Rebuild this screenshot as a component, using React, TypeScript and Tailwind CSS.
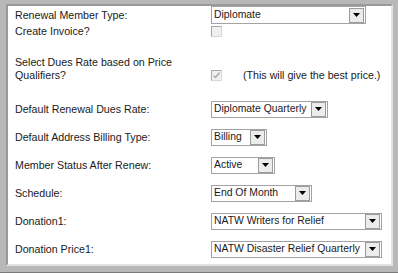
import React from "react";

type SelectProps = { value: string; width: number; tall?: boolean };

function FakeSelect({ value, width, tall }: SelectProps) {
  return (
    <div
      className={`flex items-center bg-white border border-[#a3a3a3] ${tall ? "h-[18px]" : "h-[17px]"}`}
      style={{ width }}
    >
      <span className="flex-1 overflow-hidden whitespace-nowrap pl-[2px] text-[10.4px] leading-none">{value}</span>
      <span className="mr-[1px] flex h-[15px] w-[15px] shrink-0 items-center justify-center border border-[#9b9b9b] bg-[#ececec]">
        <svg width="7" height="4" viewBox="0 0 7 4">
          <path d="M0 0h7L3.5 4z" fill="#000" />
        </svg>
      </span>
    </div>
  );
}

function Check({ checked }: { checked?: boolean }) {
  return (
    <span className="flex h-[11px] w-[11px] items-center justify-center border border-t-[#a8a8a8] border-l-[#a8a8a8] border-r-[#d8d8d8] border-b-[#d8d8d8] bg-[#f0f0f0]">
      {checked && (
        <svg width="9" height="9" viewBox="0 0 9 9">
          <path d="M1.5 4.5l2 2 4-5" stroke="#a8a8a8" strokeWidth="1.3" fill="none" />
        </svg>
      )}
    </span>
  );
}

const rows: { label: string; value: string; width: number }[] = [
  { label: "Default Renewal Dues Rate:", value: "Diplomate Quarterly", width: 117 },
  { label: "Default Address Billing Type:", value: "Billing", width: 56 },
  { label: "Member Status After Renew:", value: "Active", width: 64 },
  { label: "Schedule:", value: "End Of Month", width: 101 },
  { label: "Donation1:", value: "NATW Writers for Relief", width: 171 },
  { label: "Donation Price1:", value: "NATW Disaster Relief Quarterly", width: 171 },
];

export default function App() {
  return (
    <div className="h-[273px] w-[398px] bg-[#b8b8b8] pt-[4px] pl-[6px] pr-[5px] pb-[6px] border-b border-[#7a7a7a] font-['Liberation_Sans',Arial,sans-serif] text-[10.67px] text-[#1a1a1a]">
      <div className="h-full border-2 border-t-[#9a9a9a] border-l-[#9a9a9a] border-r-[#e2e2e2] border-b-[#e2e2e2] bg-white pl-[7px]">
        <div className="flex h-[18px] items-center">
          <div className="w-[196px]">Renewal Member Type:</div>
          <FakeSelect value="Diplomate" width={155} tall />
        </div>
        <div className="flex h-[14px] items-center">
          <div className="w-[196px]">Create Invoice?</div>
          <Check />
        </div>
        <div className="flex h-[57px] items-start pt-[18px]">
          <div className="w-[196px] leading-[13px]">
            Select Dues Rate based on Price
            <br />
            Qualifiers?
          </div>
          <div className="flex items-center pt-[11px]">
            <Check checked />
            <span className="ml-[21px]">(This will give the best price.)</span>
          </div>
        </div>
        {rows.map((r) => (
          <div key={r.label} className="flex h-[28px] items-center">
            <div className="w-[196px]">{r.label}</div>
            <FakeSelect value={r.value} width={r.width} />
          </div>
        ))}
      </div>
    </div>
  );
}
